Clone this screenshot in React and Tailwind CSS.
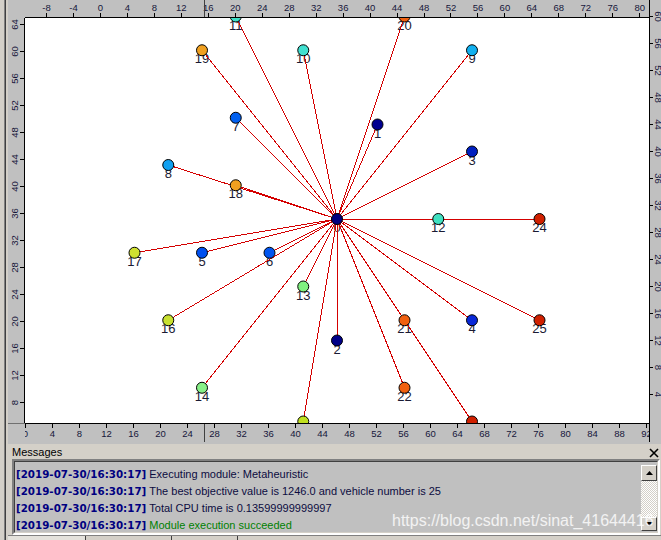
import React from 'react';

// Solomon R101, first 25 customers, depot at (35, 35)
const nodes = [
    [0, 35, 35], [1, 41, 49], [2, 35, 17], [3, 55, 45], [4, 55, 20], [5, 15, 30],
    [6, 25, 30], [7, 20, 50], [8, 10, 43], [9, 55, 60], [10, 30, 60], [11, 20, 65],
    [12, 50, 35], [13, 30, 25], [14, 15, 10], [15, 30, 5], [16, 10, 20], [17, 5, 30],
    [18, 20, 40], [19, 15, 60], [20, 45, 65], [21, 45, 20], [22, 45, 10], [23, 55, 5],
    [24, 65, 35], [25, 65, 20],
];

const nodeColors = [
    '#000080', '#000090', '#000088', '#0020c0', '#0828d8', '#0050f0',
    '#0055f0', '#0060f0', '#10a0f0', '#10b0f0', '#40e0d0', '#40e0c8',
    '#40e0c0', '#80f080', '#88f088', '#c0e020', '#c8e030', '#d0e030',
    '#f0a020', '#f0a020', '#f06010', '#f06010', '#f06010', '#d02000',
    '#d02000', '#d02000',
];

const SCALE = 6.75;
const PLOT_H = 405;
const px = (x) => 312 + (x - 35) * SCALE;
const py = (y) => 201 + (35 - y) * SCALE;

const rulerFont = 'Liberation Sans, Arial, sans-serif';
const rulerInk = '#16163a';

const range = (from, to, step) => {
    const out = [];
    if (step > 0) for (let v = from; v <= to; v += step) out.push(v);
    else for (let v = from; v >= to; v += step) out.push(v);
    return out;
};

const TopRuler = () => (
    <svg width="624" height="17" className="block">
        {range(-8, 80, 4).map((v) => {
            const x = 75.5 + v * 6.74;
            return (
                <g key={v}>
                    <line x1={x} y1="13" x2={x} y2="17" stroke="#000" shapeRendering="crispEdges" />
                    <text x={x} y="11" textAnchor="middle" fontSize="9.5" fontFamily={rulerFont} fill={rulerInk}>{v}</text>
                </g>
            );
        })}
        <line x1="179.5" y1="0" x2="179.5" y2="17" stroke="#404040" shapeRendering="crispEdges" />
    </svg>
);

const BottomRuler = () => (
    <svg width="624" height="18" className="block">
        {range(0, 92, 4).map((v) => {
            const x = 0.5 + v * SCALE;
            return (
                <g key={v}>
                    <line x1={x} y1="0" x2={x} y2="4" stroke="#000" shapeRendering="crispEdges" />
                    <text x={x} y="13" textAnchor="middle" fontSize="9.5" fontFamily={rulerFont} fill={rulerInk}>{v}</text>
                </g>
            );
        })}
        <line x1="179.5" y1="0" x2="179.5" y2="18" stroke="#404040" shapeRendering="crispEdges" />
    </svg>
);

const LeftRuler = () => (
    <svg width="16" height="405" className="block">
        {range(64, 8, -4).map((v) => {
            const y = 6.5 + (64 - v) * SCALE;
            return (
                <g key={v}>
                    <line x1="12" y1={y} x2="16" y2={y} stroke="#000" shapeRendering="crispEdges" />
                    <text transform={`translate(9.5 ${y}) rotate(-90)`} textAnchor="middle" fontSize="9.5" fontFamily={rulerFont} fill={rulerInk}>{v}</text>
                </g>
            );
        })}
    </svg>
);

const RightRuler = () => (
    <svg width="11" height="442" className="block">
        {range(60, 4, -4).map((v) => {
            const y = 43.5 + (56 - v) * SCALE;
            return (
                <g key={v}>
                    <line x1="0" y1={y} x2="3" y2={y} stroke="#000" shapeRendering="crispEdges" />
                    <text transform={`translate(5 ${y}) rotate(90)`} textAnchor="middle" fontSize="9.5" fontFamily={rulerFont} fill={rulerInk}>{v}</text>
                </g>
            );
        })}
    </svg>
);

const Plot = () => {
    const [, dx, dy] = nodes[0];
    // labels that would fall below the visible plot are not drawn
    const labelled = nodes.filter(([, , y]) => py(y) + 13 < PLOT_H);
    return (
        <svg width="624" height={PLOT_H} className="block">
            {labelled.map(([id, x, y]) => (
                <text key={`l${id}`} x={px(x)} y={py(y) + 13} textAnchor="middle" fontSize="13" fontFamily={rulerFont} fill="#1a1a33">
                    {id}
                </text>
            ))}
            {nodes.slice(1).map(([id, x, y]) => (
                <line key={`e${id}`} x1={px(dx)} y1={py(dy)} x2={px(x)} y2={py(y)} stroke="#d40000" strokeWidth="1" shapeRendering="crispEdges" />
            ))}
            {nodes.map(([id, x, y]) => (
                <circle key={`n${id}`} cx={px(x)} cy={py(y)} r="5.5" fill={nodeColors[id]} stroke="#000" strokeWidth="1" />
            ))}
        </svg>
    );
};

const ChartView = () => (
    <div className="grid h-[442px] grid-cols-[17px_624px_12px] grid-rows-[18px_405px_19px] bg-[#c0c0c0]">
        <div className="col-start-1 row-start-1" />
        <div className="col-start-2 row-start-1 border-b border-black overflow-hidden">
            <TopRuler />
        </div>
        <div className="col-start-3 row-start-1 row-span-3 border-l border-black overflow-hidden">
            <RightRuler />
        </div>
        <div className="col-start-1 row-start-2 border-r border-black overflow-hidden">
            <LeftRuler />
        </div>
        <div className="col-start-2 row-start-2 bg-white overflow-hidden">
            <Plot />
        </div>
        <div className="col-start-1 row-start-3 border-t border-[#707070]" />
        <div className="col-start-2 row-start-3 border-t border-black overflow-hidden">
            <BottomRuler />
        </div>
    </div>
);

const messages = [
    { text: 'Executing module: Metaheuristic', color: 'text-[#0c0c40]' },
    { text: 'The best objective value is 1246.0 and vehicle number is 25', color: 'text-[#0c0c40]' },
    { text: 'Total CPU time is 0.13599999999997', color: 'text-[#0c0c40]' },
    { text: 'Module execution succeeded', color: 'text-[#008000]' },
];

const Arrow = ({ down }) => (
    <svg width="7" height="4" viewBox="0 0 7 4">
        <path d={down ? 'M0 0h7L3.5 4z' : 'M3.5 0L7 4H0z'} fill="#000" />
    </svg>
);

const Scrollbar = () => (
    <div className="flex w-4 flex-col pt-[3px] pb-px">
        <div className="flex h-4 items-center justify-center border border-t-white border-l-white border-r-[#404040] border-b-[#404040] bg-[#d4d0c8]">
            <Arrow />
        </div>
        <div className="flex-1 bg-[repeating-conic-gradient(#ffffff_0%_25%,#d4d0c8_0%_50%)] bg-size-[2px_2px]" />
        <div className="flex h-[14px] items-center justify-center border border-t-white border-l-white border-r-[#404040] border-b-[#404040] bg-[#d4d0c8]">
            <Arrow down />
        </div>
    </div>
);

const MessagesPanel = () => (
    <div className="relative flex h-[98px] flex-col border-t-2 border-[#c0c0c0]">
        <div className="flex h-[15px] items-center justify-between pl-1 pr-[2px] text-[11px] leading-[15px] text-black">
            <span className="pt-[2px]">Messages</span>
            <svg width="10" height="10" viewBox="0 0 10 10" className="mt-[3px]">
                <path d="M1 1L9 9M9 1L1 9" stroke="#000" strokeWidth="1.6" />
            </svg>
        </div>
        <div className="ml-1 mr-px flex h-[76px] border-2 border-t-[#808080] border-l-[#808080] border-r-white border-b-white">
            <div className="flex flex-1 border border-t-[#404040] border-l-[#404040] border-r-[#d4d0c8] border-b-[#d4d0c8] bg-[#c0c0c0]">
                <div className="flex-1 pl-px pt-[4px]">
                    {messages.map((m, i) => (
                        <div key={i} className="flex h-[17px] items-center whitespace-nowrap">
                            <span className="font-['DejaVu_Sans',sans-serif] text-[10.3px] font-bold text-[#000080]">
                                [2019-07-30/16:30:17]
                            </span>
                            <span className={`ml-[3px] text-[11px] ${m.color}`}>{m.text}</span>
                        </div>
                    ))}
                </div>
                <Scrollbar />
            </div>
        </div>
        <div className="flex h-[5px] border-t border-[#808080]">
            <div className="w-[78px] border-r border-[#404040] bg-[#e4e2dc]" />
            <div className="w-[86px] border-r border-[#404040]" />
            <div className="w-[66px] border-r border-[#404040]" />
            <div className="flex-1" />
        </div>
        <div className="pointer-events-none absolute left-[384px] top-[69px] whitespace-nowrap text-[16px] leading-4 text-white/80">
            https://blog.csdn.net/sinat_41644416
        </div>
    </div>
);

const WindowEdge = () => (
    <div className="flex w-2 shrink-0">
        <div className="w-[4px] bg-[#d4d0c8]" />
        <div className="w-px bg-[#808080]" />
        <div className="w-px bg-[#404040]" />
        <div className="w-[2px] bg-[#d4d0c8]" />
    </div>
);

export default function App() {
    return (
        <div className="flex h-[540px] w-[661px] overflow-hidden bg-[#d4d0c8] font-['Liberation_Sans',Arial,sans-serif]">
            <WindowEdge />
            <div className="flex w-[653px] shrink-0 flex-col">
                <ChartView />
                <MessagesPanel />
            </div>
        </div>
    );
}
